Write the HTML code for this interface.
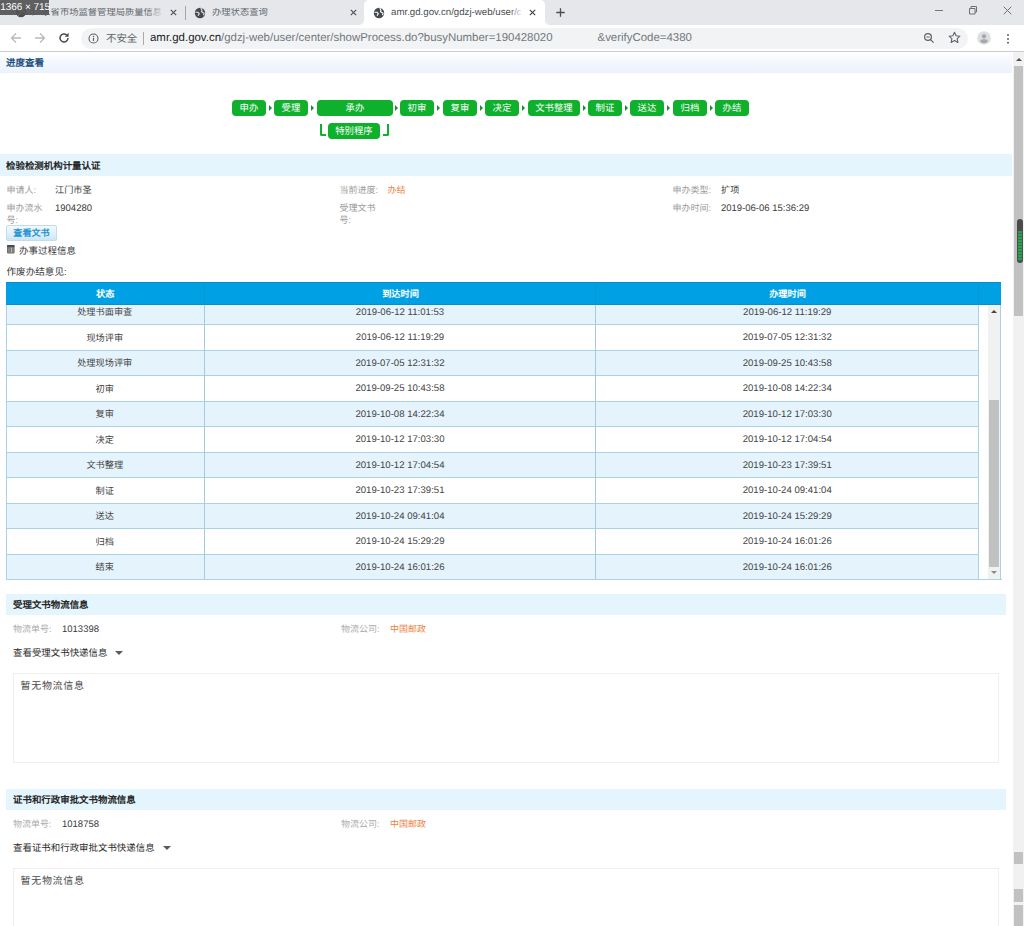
<!DOCTYPE html>
<html lang="zh-CN">
<head>
<meta charset="utf-8">
<title>amr.gd.gov.cn/gdzj-web/user/center/showProcess.do</title>
<style>
html,body{margin:0;padding:0;}
body{width:1024px;height:926px;overflow:hidden;position:relative;background:#fff;font-family:"Liberation Sans",sans-serif;font-size:10px;color:#333;text-rendering:geometricPrecision;}
.a{position:absolute;white-space:nowrap;line-height:1;}
/* ---------- browser chrome ---------- */
#tabbar{left:0;top:0;width:1024px;height:25px;background:#e5e7eb;}
#toolbar{left:0;top:25px;width:1024px;height:26px;background:#fff;}
#tbline{left:0;top:51.3px;width:1024px;height:1px;background:#c9cbce;}
#acttab{left:364px;top:0;width:181px;height:25px;background:#fff;border-radius:5px 5px 0 0;}
#acttab:before,#acttab:after{content:"";position:absolute;bottom:0;width:5px;height:5px;}
#acttab:before{left:-5px;background:radial-gradient(circle at 0 0,rgba(255,255,255,0) 4.5px,#fff 5.5px);}
#acttab:after{right:-5px;background:radial-gradient(circle at 100% 0,rgba(255,255,255,0) 4.5px,#fff 5.5px);}
.tabt{top:8px;font-size:9.3px;height:12px;color:#63676c;overflow:hidden;}
.tx{top:6px;font-size:12px;color:#3c4043;}
#omni{left:81px;top:28px;width:887px;height:21px;background:#f1f3f4;border-radius:11px;}
.url{top:33px;font-size:11.45px;height:13px;}
#ovl{left:0;top:0;width:49px;height:14.5px;background:rgba(84,84,84,.92);color:#fff;font-size:10px;line-height:15px;text-indent:.3px;letter-spacing:-.05px;}
/* ---------- page ---------- */
.bar{background:#e4f5fd;}
.bart{font-size:9.45px;font-weight:bold;color:#262626;}
.lbl{color:#9c9c9c;font-size:9px;}
.val{color:#3a3a3a;font-size:9.5px;}
.valc{color:#3a3a3a;font-size:9.2px;}
.org{color:#ec7f42;font-size:9px;}
.step{top:100px;height:16px;background:#0eb02c;border-radius:4px;color:#fff;font-size:9.4px;line-height:16px;text-align:center;}
.arr{top:105px;width:0;height:0;border-left:3px solid #1c8c2e;border-top:3px solid transparent;border-bottom:3px solid transparent;}
/* table */
.row{left:0;width:972px;height:25.5px;}
.row.o{background:#e5f3fc;}
.hl{left:0;width:972px;height:1px;background:#a9d3e4;}
.c{top:1.3px;height:25px;line-height:25px;text-align:center;font-size:9.6px;color:#444;}
.cc{font-size:9.2px;top:1.8px;}
.c1{left:0;width:197.5px;}
.c2{left:198px;width:392px;}
.c3{left:590px;width:382.5px;}
.th{top:283.3px;height:23px;line-height:23px;text-align:center;color:#fff;font-size:9.2px;font-weight:bold;}
.box{left:13px;width:984px;height:88px;border:1px solid #efefef;background:#fff;}
.lnk{left:13px;font-size:9.45px;color:#2b2b2b;}
.tri{width:0;height:0;border-left:4.3px solid transparent;border-right:4.3px solid transparent;border-top:4.200px solid #5a5a5a;}
.ta{left:20.500px;font-size:10px;color:#4a4a4a;letter-spacing:.700px;}
</style>
</head>
<body>
<!-- browser chrome -->
<div class="a" id="tabbar"></div>
<div class="a" id="acttab"></div>
<div class="a" id="toolbar"></div>
<div class="a" id="tbline"></div>
<div class="a" id="omni"></div>

<!-- tab 1 -->
<svg class="a" style="left:14.500px;top:5.700px" width="12" height="12" viewBox="0 0 12 12"><circle cx="6" cy="6" r="5.2" fill="#4a4e53"/><path d="M2 4.500h3l1 1.500-1.500 2L3 9M7 1.500l1.500 2L8 5l2 1.500" stroke="#e5e7eb" stroke-width="1.100" fill="none"/></svg>
<div class="a tabt" style="left:32px;width:131px;">广东省市场监督管理局质量信息公</div>
<div class="a" style="left:148px;top:3px;width:16px;height:19px;background:linear-gradient(90deg,rgba(229,231,235,0),#e5e7eb);"></div>
<svg class="a" style="left:170px;top:9px" width="7" height="7" viewBox="0 0 7 7"><path d="M.8.800l5.400 5.400M6.200.800L.8 6.200" stroke="#4a4e53" stroke-width="1.100"/></svg>
<div class="a" style="left:184.500px;top:6px;width:1px;height:14px;background:#a3a6aa;"></div>
<!-- tab 2 -->
<svg class="a" style="left:193.500px;top:6.500px" width="12" height="12" viewBox="0 0 12 12"><circle cx="6" cy="6" r="5.200" fill="#45494d"/><path d="M1.500 5.200h2.600l1.200 1.600-1.300 2M6.800 1l1.200 2.200-.5 1.600 2.600 1.400-.6 2" stroke="#e5e7eb" stroke-width="1.100" fill="none"/></svg>
<div class="a tabt" style="left:212px;">办理状态查询</div>
<svg class="a" style="left:349.500px;top:9px" width="7" height="7" viewBox="0 0 7 7"><path d="M.8.800l5.400 5.400M6.200.800L.8 6.200" stroke="#4a4e53" stroke-width="1.100"/></svg>
<!-- tab 3 active -->
<svg class="a" style="left:373px;top:6.500px" width="12" height="12" viewBox="0 0 12 12"><circle cx="6" cy="6" r="5.200" fill="#45494d"/><path d="M1.500 5.200h2.600l1.200 1.600-1.300 2M6.800 1l1.200 2.200-.5 1.600 2.600 1.400-.6 2" stroke="#fff" stroke-width="1.100" fill="none"/></svg>
<div class="a tabt" style="left:391px;top:7.800px;width:131px;height:12px;font-size:9.700px;color:#4a4e53;">amr.gd.gov.cn/gdzj-web/user/center</div>
<div class="a" style="left:510px;top:5px;width:13px;height:17px;background:linear-gradient(90deg,rgba(255,255,255,0),#fff);"></div>
<svg class="a" style="left:529px;top:8.500px" width="7" height="7" viewBox="0 0 7 7"><path d="M.8.800l5.400 5.400M6.200.800L.8 6.200" stroke="#3c4043" stroke-width="1.100"/></svg>
<svg class="a" style="left:556px;top:7.500px" width="9" height="9" viewBox="0 0 9 9"><path d="M4.500.300v8.400M.3 4.500h8.400" stroke="#4a4e53" stroke-width="1.300"/></svg>
<!-- window controls -->
<div class="a" style="left:935px;top:9.500px;width:8px;height:1px;background:#777;"></div>
<svg class="a" style="left:968px;top:5px" width="10" height="10" viewBox="0 0 10 10"><path d="M1.500 3.500h5.500v5.500h-5.500zM3 3.300v-1.800h5.500v5.500h-1.600" stroke="#707070" stroke-width="1" fill="none" stroke-linejoin="round"/></svg>
<svg class="a" style="left:1003px;top:5.500px" width="9" height="9" viewBox="0 0 9 9"><path d="M.7.700l7.600 7.600M8.300.700l-7.600 7.600" stroke="#707070" stroke-width="1"/></svg>
<!-- toolbar -->
<svg class="a" style="left:10px;top:32px" width="12" height="12" viewBox="0 0 12 12"><path d="M11 6H1.500M6 1.500L1.500 6 6 10.500" stroke="#b8bbbf" stroke-width="1.300" fill="none"/></svg>
<svg class="a" style="left:34px;top:32px" width="12" height="12" viewBox="0 0 12 12"><path d="M1 6h9.500M6 1.500L10.500 6 6 10.500" stroke="#b8bbbf" stroke-width="1.300" fill="none"/></svg>
<svg class="a" style="left:58px;top:32px" width="12" height="12" viewBox="0 0 12 12"><path d="M10 6a4 4 0 1 1-1.300-3" stroke="#4a4d51" stroke-width="1.500" fill="none"/><path d="M10.600 0.800v4h-4z" fill="#4a4d51"/></svg>
<svg class="a" style="left:88px;top:33px" width="11" height="11" viewBox="0 0 11 11"><circle cx="5.500" cy="5.500" r="4.500" stroke="#5f6368" stroke-width="1.100" fill="none"/><path d="M5.500 4.800v3.200M5.500 2.800v1.100" stroke="#5f6368" stroke-width="1.200"/></svg>
<div class="a url" style="left:106px;top:34.500px;font-size:10.400px;color:#5f6368;">不安全</div>
<div class="a" style="left:143px;top:32px;width:1px;height:13px;background:#a8acb1;"></div>
<div class="a url" style="left:150px;color:#202124;">amr.gd.gov.cn<span style="color:#73777c">/gdzj-web/user/center/showProcess.do?busyNumber=190428020</span></div>
<div class="a url" style="left:597.500px;color:#73777c;">&amp;verifyCode=4380</div>
<svg class="a" style="left:923px;top:32px" width="12" height="12" viewBox="0 0 12 12"><circle cx="5" cy="5" r="3.400" stroke="#5f6368" stroke-width="1.200" fill="none"/><path d="M7.600 7.600l3 3M3.400 5h3.200" stroke="#5f6368" stroke-width="1.200"/></svg>
<svg class="a" style="left:947.500px;top:31px" width="13" height="13" viewBox="0 0 13 13"><path d="M6.500 1.300l1.600 3.500 3.800.4-2.800 2.500.8 3.800-3.400-2-3.400 2 .8-3.800L1.100 5.200l3.800-.4z" stroke="#5f6368" stroke-width="1.100" fill="none" stroke-linejoin="round"/></svg>
<svg class="a" style="left:977px;top:31px" width="14" height="14" viewBox="0 0 14 14"><circle cx="7" cy="7" r="6.800" fill="#dcdee1"/><circle cx="7" cy="5.300" r="2.100" fill="#a3a6aa"/><path d="M3 10.600c.6-1.900 2-2.400 4-2.400s3.400.5 4 2.400a5.500 5.500 0 0 1-8 0z" fill="#a3a6aa"/></svg>
<div class="a" style="left:1007.400px;top:33.500px;width:2px;height:2px;background:#5f6368;border-radius:1px;box-shadow:0 3.900px 0 #5f6368,0 7.800px 0 #5f6368;"></div>
<div class="a" id="ovl">1366 × 715</div>

<!-- ================= page ================= -->
<div class="a" style="left:0;top:52px;width:1012px;height:21px;background:linear-gradient(180deg,#ffffff 0%,#f5f9fe 40%,#ebf2fd 100%);"></div>
<div class="a" style="left:6px;top:58.800px;font-size:9.500px;font-weight:bold;color:#1c4f80;">进度查看</div>
<!-- steps -->
<div class="a step" style="left:232px;width:34px;">申办</div>
<div class="a arr" style="left:268.5px;"></div>
<div class="a step" style="left:274px;width:34px;">受理</div>
<div class="a arr" style="left:311.0px;"></div>
<div class="a step" style="left:317px;width:76px;">承办</div>
<div class="a arr" style="left:395.0px;"></div>
<div class="a step" style="left:400px;width:34px;">初审</div>
<div class="a arr" style="left:437.0px;"></div>
<div class="a step" style="left:443px;width:34px;">复审</div>
<div class="a arr" style="left:479.5px;"></div>
<div class="a step" style="left:485px;width:34px;">决定</div>
<div class="a arr" style="left:522.0px;"></div>
<div class="a step" style="left:528px;width:52px;">文书整理</div>
<div class="a arr" style="left:582.5px;"></div>
<div class="a step" style="left:588px;width:34px;">制证</div>
<div class="a arr" style="left:624.5px;"></div>
<div class="a step" style="left:630px;width:34px;">送达</div>
<div class="a arr" style="left:667.0px;"></div>
<div class="a step" style="left:673px;width:34px;">归档</div>
<div class="a arr" style="left:709.5px;"></div>
<div class="a step" style="left:715px;width:34px;">办结</div>
<div class="a step" style="left:328px;top:123px;width:52px;">特别程序</div>
<div class="a" style="left:319.500px;top:124px;width:4px;height:10px;border-left:2px solid #0eb02c;border-bottom:2px solid #0eb02c;border-radius:0 0 0 2px;"></div>
<div class="a" style="left:383px;top:124px;width:4px;height:10px;border-right:2px solid #0eb02c;border-bottom:2px solid #0eb02c;border-radius:0 0 2px 0;"></div>
<!-- section 1 -->
<div class="a bar" style="left:0;top:153.800px;width:1012px;height:21.800px;"></div>
<div class="a bart" style="left:6px;top:162.2px;">检验检测机构计量认证</div>
<div class="a lbl" style="left:6.500px;top:185.9px;">申请人:</div>
<div class="a valc" style="left:55px;top:185.8px;">江门市圣</div>
<div class="a lbl" style="left:339.500px;top:185.9px;">当前进度:</div>
<div class="a org" style="left:387.500px;top:185.9px;">办结</div>
<div class="a lbl" style="left:672.500px;top:185.9px;">申办类型:</div>
<div class="a valc" style="left:721px;top:185.8px;">扩项</div>
<div class="a lbl" style="left:6.500px;top:203.9px;">申办流水</div>
<div class="a lbl" style="left:6.500px;top:216.0px;">号:</div>
<div class="a val" style="left:55px;top:204.0px;">1904280</div>
<div class="a lbl" style="left:339.500px;top:203.9px;">受理文书</div>
<div class="a lbl" style="left:339.500px;top:216.0px;">号:</div>
<div class="a lbl" style="left:672.500px;top:203.9px;">申办时间:</div>
<div class="a val" style="left:721px;top:204.0px;">2019-06-06 15:36:29</div>
<div class="a" style="left:6px;top:225px;width:51px;height:16px;box-sizing:border-box;border:1px solid #c3dbec;border-radius:2px;background:linear-gradient(180deg,#f1f9fd 0%,#e0f1fa 55%,#cbe6f5 100%);color:#2893cf;font-size:9.100px;line-height:14.500px;text-align:center;font-weight:bold;">查看文书</div>
<svg class="a" style="left:7.200px;top:245.200px" width="7.600" height="8.400" viewBox="0 0 7.600 8.400"><rect x="0" y="0" width="7.600" height="8.400" rx=".8" fill="#6e6e6e"/><rect x="0" y="0" width="7.600" height="2" rx=".8" fill="#4c4c4c"/><rect x="3.900" y="2.600" width="1" height="5" fill="#c4c4c4"/><rect x="1" y="2.600" width="2.300" height="5" fill="#858585"/><rect x="5.400" y="2.600" width="1.300" height="5" fill="#858585"/></svg>
<div class="a" style="left:19px;top:247.400px;font-size:9.500px;color:#3a3a3a;">办事过程信息</div>
<div class="a" style="left:6.500px;top:267.600px;font-size:9.600px;color:#3a3a3a;">作废办结意见:</div>
<!-- table -->
<div class="a" style="left:6px;top:282px;width:995px;height:23px;background:#00a1e4;box-shadow:inset 0 1px 0 rgba(20,120,170,.55),inset 0 -1px 0 rgba(20,120,170,.45);"></div>
<div class="a" style="left:203.500px;top:282px;width:1px;height:23px;background:#0398d8;"></div>
<div class="a" style="left:595.300px;top:282px;width:1px;height:23px;background:#0398d8;"></div>
<div class="a" style="left:978px;top:282px;width:1px;height:23px;background:#0398d8;"></div>
<div class="a th" style="left:6.500px;width:197.500px;">状态</div>
<div class="a th" style="left:204.500px;width:392px;">到达时间</div>
<div class="a th" style="left:596px;width:383px;">办理时间</div>
<div class="a" id="tbody" style="left:6px;top:305px;width:995px;height:274px;overflow:hidden;">
<div class="a row o" style="top:-6.5px;"><div class="a c cc c1">处理书面审查</div><div class="a c c2">2019-06-12 11:01:53</div><div class="a c c3">2019-06-12 11:19:29</div></div>
<div class="a row" style="top:19.0px;"><div class="a c cc c1">现场评审</div><div class="a c c2">2019-06-12 11:19:29</div><div class="a c c3">2019-07-05 12:31:32</div></div>
<div class="a row o" style="top:44.5px;"><div class="a c cc c1">处理现场评审</div><div class="a c c2">2019-07-05 12:31:32</div><div class="a c c3">2019-09-25 10:43:58</div></div>
<div class="a row" style="top:70.0px;"><div class="a c cc c1">初审</div><div class="a c c2">2019-09-25 10:43:58</div><div class="a c c3">2019-10-08 14:22:34</div></div>
<div class="a row o" style="top:95.5px;"><div class="a c cc c1">复审</div><div class="a c c2">2019-10-08 14:22:34</div><div class="a c c3">2019-10-12 17:03:30</div></div>
<div class="a row" style="top:121.0px;"><div class="a c cc c1">决定</div><div class="a c c2">2019-10-12 17:03:30</div><div class="a c c3">2019-10-12 17:04:54</div></div>
<div class="a row o" style="top:146.5px;"><div class="a c cc c1">文书整理</div><div class="a c c2">2019-10-12 17:04:54</div><div class="a c c3">2019-10-23 17:39:51</div></div>
<div class="a row" style="top:172.0px;"><div class="a c cc c1">制证</div><div class="a c c2">2019-10-23 17:39:51</div><div class="a c c3">2019-10-24 09:41:04</div></div>
<div class="a row o" style="top:197.5px;"><div class="a c cc c1">送达</div><div class="a c c2">2019-10-24 09:41:04</div><div class="a c c3">2019-10-24 15:29:29</div></div>
<div class="a row" style="top:223.0px;"><div class="a c cc c1">归档</div><div class="a c c2">2019-10-24 15:29:29</div><div class="a c c3">2019-10-24 16:01:26</div></div>
<div class="a row o" style="top:248.5px;"><div class="a c cc c1">结束</div><div class="a c c2">2019-10-24 16:01:26</div><div class="a c c3">2019-10-24 16:01:26</div></div>
<div class="a hl" style="top:19.0px;"></div>
<div class="a hl" style="top:44.5px;"></div>
<div class="a hl" style="top:70.0px;"></div>
<div class="a hl" style="top:95.5px;"></div>
<div class="a hl" style="top:121.0px;"></div>
<div class="a hl" style="top:146.5px;"></div>
<div class="a hl" style="top:172.0px;"></div>
<div class="a hl" style="top:197.5px;"></div>
<div class="a hl" style="top:223.0px;"></div>
<div class="a hl" style="top:248.5px;"></div>
<div class="a" style="left:0;top:0;width:1px;height:274px;background:#a9d3e4;"></div>
<div class="a" style="left:197.500px;top:0;width:1px;height:274px;background:#a4cbd9;"></div>
<div class="a" style="left:589.300px;top:0;width:1px;height:274px;background:#a4cbd9;"></div>
<div class="a" style="left:972px;top:0;width:1px;height:274px;background:#a9d3e4;"></div>
<div class="a" style="left:973px;top:0;width:22px;height:274px;background:#fff;"></div>
<div class="a" style="left:982px;top:0;width:12px;height:274px;background:#f1f1f1;"></div>
<div class="a" style="left:994px;top:0;width:1px;height:274px;background:#a9d3e4;"></div>
<div class="a" style="left:983px;top:95px;width:10px;height:167px;background:#c1c1c1;"></div>
<div class="a" style="left:985px;top:5px;width:0;height:0;border-left:3px solid transparent;border-right:3px solid transparent;border-bottom:3.500px solid #444;"></div>
<div class="a" style="left:985px;top:266px;width:0;height:0;border-left:3px solid transparent;border-right:3px solid transparent;border-top:3.500px solid #8a8a8a;"></div>
</div>
<div class="a" style="left:6px;top:579px;width:996px;height:1px;background:#a9d3e4;"></div>
<!-- section 2 -->
<div class="a bar" style="left:6px;top:594px;width:999.500px;height:21.300px;"></div>
<div class="a bart" style="left:13px;top:600.8px;">受理文书物流信息</div>
<div class="a lbl" style="left:13px;top:624.8px;color:#ababab;">物流单号:</div>
<div class="a val" style="left:62px;top:624.9px;">1013398</div>
<div class="a lbl" style="left:341px;top:624.8px;color:#ababab;">物流公司:</div>
<div class="a org" style="left:390px;top:624.8px;">中国邮政</div>
<div class="a lnk" style="top:648.6px;">查看受理文书快递信息</div>
<div class="a tri" style="left:114.8px;top:651.0px;"></div>
<div class="a box" style="top:672.5px;"></div>
<div class="a ta" style="top:682.3px;">暂无物流信息</div>
<!-- section 3 -->
<div class="a bar" style="left:6px;top:789px;width:999.500px;height:21.300px;"></div>
<div class="a bart" style="left:13px;top:795.8px;">证书和行政审批文书物流信息</div>
<div class="a lbl" style="left:13px;top:819.8px;color:#ababab;">物流单号:</div>
<div class="a val" style="left:62px;top:819.9px;">1018758</div>
<div class="a lbl" style="left:341px;top:819.8px;color:#ababab;">物流公司:</div>
<div class="a org" style="left:390px;top:819.8px;">中国邮政</div>
<div class="a lnk" style="top:843.6px;">查看证书和行政审批文书快递信息</div>
<div class="a tri" style="left:162.5px;top:846.0px;"></div>
<div class="a box" style="top:867.5px;"></div>
<div class="a ta" style="top:877.3px;">暂无物流信息</div>
<!-- page scrollbar -->
<div class="a" style="left:1013px;top:52px;width:11px;height:874px;background:#f1f1f1;"></div>
<div class="a" style="left:1014px;top:65.500px;width:9px;height:250px;background:#c1c1c1;"></div>
<div class="a" style="left:1015.500px;top:57.500px;width:0;height:0;border-left:3px solid transparent;border-right:3px solid transparent;border-bottom:3.500px solid #505050;"></div>
<div class="a" style="left:1017px;top:219px;width:6px;height:44px;background:#4a4c4b;border-radius:3px;"></div>
<div class="a" style="left:1018px;top:231px;width:4px;height:30px;background:repeating-linear-gradient(180deg,#319d52 0,#319d52 2px,#277d42 2px,#277d42 3px);border-radius:0 0 2px 2px;"></div>
<div class="a" style="left:1014px;top:852px;width:9px;height:12px;background:#c1c1c1;"></div>
<div class="a" style="left:1014px;top:889px;width:9px;height:13px;background:#c1c1c1;"></div>
<div class="a" style="left:1014px;top:905px;width:9px;height:21px;background:#c1c1c1;"></div>
</body>
</html>
